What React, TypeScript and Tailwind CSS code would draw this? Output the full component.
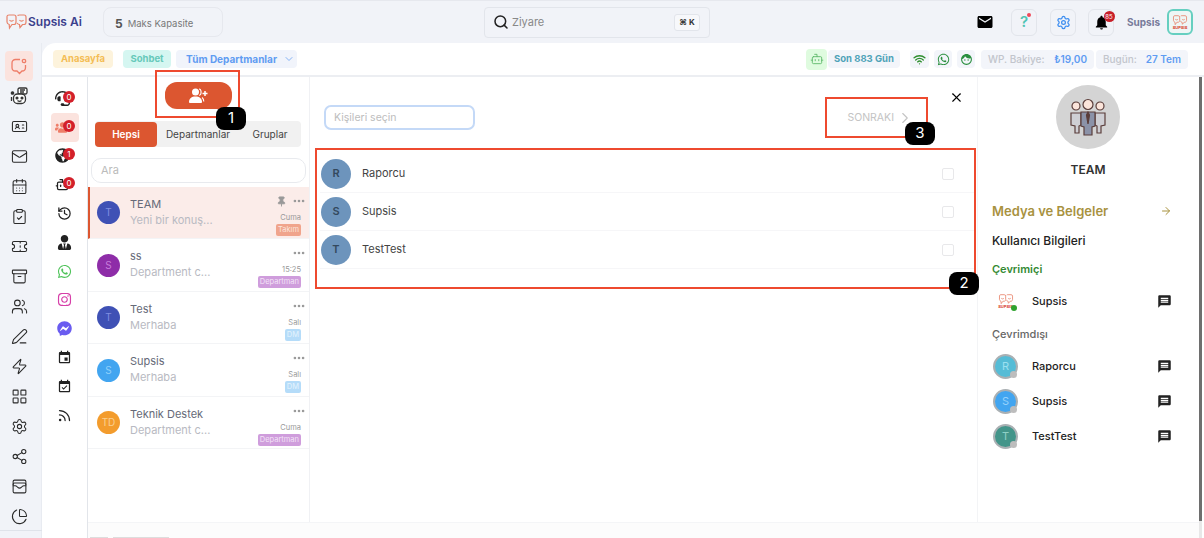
import React from "react";
import {
  IdCard, Mail, CalendarDays, ClipboardCheck, Ticket, Archive, Users, PenLine, Zap, LayoutGrid, Settings, Share2,
  WalletCards, PieChart, Search, ChevronDown, ChevronRight, X, ArrowRight, History, Rss, Wifi, Pin, Ellipsis, Bot,
} from "lucide-react";
import { FaWhatsapp, FaInstagram, FaFacebookMessenger, FaHeadset, FaUsers, FaGlobeAmericas, FaUserTie } from "react-icons/fa";
import { MdEmail, MdMessage, MdEvent, MdEventAvailable, MdNotifications, MdFace } from "react-icons/md";

const font = { fontFamily: "Inter, 'Noto Sans', sans-serif" };

function Logo({ small }: { small?: boolean }) {
  return (
    <svg width={small ? 16 : 23} height={small ? 11 : 16} viewBox="0 0 23 16" fill="none" stroke="#e8836b" strokeWidth="1.2">
      <path d="M2 2.500C2 1.500 3 1 4 1h5c1.300 0 2 .8 2 2v5c0 1.500-.8 2.500-2 2.500H7L4.500 14l-.3-3.500C2.800 10 2 9 2 8Z" />
      <path d="M12.500 1.500C13 1 13.500 1 14.500 1H19c1.200 0 2 .8 2 2v5c0 1.200-.8 2.500-2 2.500h-1.500l-2.500 3-.5-3c-1 0-2-.8-2.500-1.500" />
      <path d="M4.500 6c1 1.500 3 1.500 4 0M14.500 6c1 1.500 3 1.500 4 0" />
    </svg>
  );
}

function BrandMark() {
  return (
    <span className="flex flex-col items-center leading-none">
      <Logo small />
      <span className="text-[4px] font-bold leading-[4px] text-[#d9402a]">SUPSIS</span>
    </span>
  );
}

function Badge({ n }: { n: string }) {
  return (
    <span className="absolute -right-[5px] top-0 flex h-[12px] w-[12px] items-center justify-center rounded-full bg-[#d3202a] text-[8px] leading-none text-white">
      {n}
    </span>
  );
}

function BubbleIcon() {
  return (
    <svg width="18" height="18" viewBox="0 0 18 18" fill="none" stroke="#ee7d68" strokeWidth="1.300">
      <path d="M10 2.500H5.500C3.500 2.500 2 4 2 6v4.500C2 12.500 3.500 14 5.500 14H7l2.500 2.500L12 14c2 0 3.500-1.500 3.500-3.500V8" />
      <circle cx="14" cy="4" r="1.700" />
    </svg>
  );
}

function BotChatIcon() {
  return (
    <svg width="19" height="19" viewBox="0 0 19 19" fill="none" stroke="#333" strokeWidth="1.300">
      <rect x="8" y="1" width="9" height="6" rx="1.500" fill="#fff" />
      <path d="M10 3h5M10 5h4" />
      <rect x="3.500" y="7" width="12" height="9.500" rx="4" fill="#fff" />
      <circle cx="7" cy="11" r=".9" fill="#333" />
      <circle cx="12" cy="11" r=".9" fill="#333" />
      <path d="M7.500 13.500c1 .8 3 .8 4 0M1.500 10v4" />
      <circle cx="2.500" cy="6" r="1.200" fill="#333" />
    </svg>
  );
}

function AddUsersIcon() {
  return (
    <svg width="19" height="15" viewBox="0 0 19 15" fill="#fff">
      <circle cx="6.500" cy="4" r="3.500" />
      <path d="M0 14c0-3.500 2.500-5.500 6.500-5.500S13 10.500 13 14c0 .5-.5 1-1 1H1c-.5 0-1-.5-1-1Z" />
      <path d="M10 1c2.500 0 3 5.500 .2 6.500M13 9.500c1.300 1 1.800 2.500 1.800 4" fill="none" stroke="#fff" strokeWidth="1.100" />
      <path d="M16 3v5M13.500 5.500h5" fill="none" stroke="#fff" strokeWidth="1.500" />
    </svg>
  );
}

const rail: { Icon: any; custom?: boolean }[] = [
  { Icon: BubbleIcon, custom: true },
  { Icon: BotChatIcon, custom: true },
  { Icon: IdCard },
  { Icon: Mail },
  { Icon: CalendarDays },
  { Icon: ClipboardCheck },
  { Icon: Ticket },
  { Icon: Archive },
  { Icon: Users },
  { Icon: PenLine },
  { Icon: Zap },
  { Icon: LayoutGrid },
  { Icon: Settings },
  { Icon: Share2 },
  { Icon: WalletCards },
  { Icon: PieChart },
];

const subRail: [any, string | undefined, string][] = [
  [FaHeadset, "0", "text-[#222]"],
  [FaUsers, "0", "text-[#ee7d68]"],
  [FaGlobeAmericas, "1", "text-[#222]"],
  [Bot, "0", "text-[#222]"],
  [History, undefined, "text-[#222]"],
  [FaUserTie, undefined, "text-[#222]"],
  [FaWhatsapp, undefined, "text-[#4fc35a]"],
  [FaInstagram, undefined, "text-[#d63fa8]"],
  [FaFacebookMessenger, undefined, "text-[#6a5cf0]"],
  [MdEvent, undefined, "text-[#222]"],
  [MdEventAvailable, undefined, "text-[#222]"],
  [Rss, undefined, "text-[#222]"],
];

const chats = [
  { name: "TEAM", msg: "Yeni bir konuş...", init: "T", color: "bg-[#3f51b5]", ini: "text-[#7f8fe0]", time: "Cuma", tag: "Takım", tagc: "bg-[#f0a48c] text-[#fbe6df]", pin: true, h: "h-[52px]" },
  { name: "ss", msg: "Department c...", init: "S", color: "bg-[#8e2da8]", ini: "text-[#c77ddb]", time: "15:25", tag: "Departman", tagc: "bg-[#cf9ddc] text-[#f3e3f7]", h: "h-[53px]" },
  { name: "Test", msg: "Merhaba", init: "T", color: "bg-[#3f51b5]", ini: "text-[#7f8fe0]", time: "Salı", tag: "DM", tagc: "bg-[#b5dcf9] text-[#e4f3fd]", h: "h-[52px]" },
  { name: "Supsis", msg: "Merhaba", init: "S", color: "bg-[#42a5f0]", ini: "text-[#8fd0fa]", time: "Salı", tag: "DM", tagc: "bg-[#b5dcf9] text-[#e4f3fd]", h: "h-[53px]" },
  { name: "Teknik Destek", msg: "Department c...", init: "TD", color: "bg-[#f39c2d]", ini: "text-[#fbd08f]", time: "Cuma", tag: "Departman", tagc: "bg-[#cf9ddc] text-[#f3e3f7]", h: "h-[52px]" },
];

function Annot({ n, box, badge }: { n: string; box: string; badge: string }) {
  return (
    <>
      <div className={`absolute border-2 border-[#ee4a2f] ${box}`} />
      <div className={`absolute flex h-[23px] w-[30px] items-center justify-center rounded-[8px] bg-black text-[15px] text-white ${badge}`}>{n}</div>
    </>
  );
}

function TeamIcon() {
  return (
    <svg width="38" height="40" viewBox="0 0 38 38" fill="none" stroke="#5a3d3a" strokeWidth="1.200">
      <circle cx="7" cy="8" r="4" fill="#fbe4da" />
      <circle cx="31" cy="8" r="4" fill="#fbe4da" />
      <path d="M2 15h10v12l-2 1v7H6v-7l-4-1ZM26 15h10v12l-4 1v7h-4v-7l-2-1Z" fill="#cfcfd4" />
      <circle cx="19" cy="6.500" r="5" fill="#fbe4da" />
      <path d="M12 14h14v14l-3 1v8h-8v-8l-3-1Z" fill="#8b92a8" />
      <path d="M19 14l-1.500 3 1.500 9 1.500-9Z" fill="#5a3d3a" />
    </svg>
  );
}

function Person({ name, init, color, ini }: { name: string; init: string; color: string; ini: string }) {
  return (
    <div className="flex h-[35px] items-center pl-[1px]">
      <div className={`relative flex h-[25px] w-[25px] items-center justify-center rounded-full border-2 border-[#aab0b3] text-[11px] ${color} ${ini}`}>
        {init}
        <span className="absolute -bottom-[1px] -right-[1px] h-[7px] w-[7px] rounded-full bg-[#bdbdbd]" />
      </div>
      <span className="ml-[14px] flex-1 text-[11px] font-medium text-[#222]">{name}</span>
      <MdMessage size={15} className="text-[#222]" />
    </div>
  );
}

export default function App() {
  return (
    <div style={font} className="relative flex h-[538px] w-[1204px] flex-col overflow-hidden bg-[#f1f3f8] text-[#333]">
      {/* top bar */}
      <header className="flex h-[43px] shrink-0 items-center border-t border-[#e6e8ee]">
        <div className="flex w-[103px] items-center pl-[5px]">
          <Logo />
          <span className="text-[12px] font-semibold text-[#3b3f8c]">Supsis Ai</span>
        </div>
        <div className="flex h-[30px] w-[120px] items-center rounded-[8px] border border-[#e6e8ee] pl-[11px] pt-[4px]">
          <span className="text-[12px] font-bold text-[#555]">5</span>
          <span className="ml-[5px] text-[9.500px] text-[#777]">Maks Kapasite</span>
        </div>
        <div className="ml-[261px] flex h-[31px] w-[226px] items-center rounded-[4px] border border-[#e2e5eb] pl-[8px] pr-[9px]">
          <Search size={16} strokeWidth={2.3} className="text-[#222]" />
          <span className="ml-[3px] flex-1 text-[11px] text-[#888]">Ziyare</span>
          <span className="flex h-[17px] w-[26px] items-center justify-center rounded-[3px] border border-[#e2e5eb] bg-[#f7f8fb] text-[8px] font-bold text-[#333]">⌘ K</span>
        </div>
        <MdEmail size={18} className="ml-[266px] text-black" />
        <div className="relative ml-[17px] flex h-[27px] w-[26px] items-center justify-center rounded-[6px] border border-[#e2e5eb] text-[15px] font-semibold text-[#4fc4b4]">
          ?<span className="absolute right-[5px] top-[3px] h-[4px] w-[4px] rounded-full bg-[#ef4a5a]" />
        </div>
        <div className="ml-[13px] flex h-[27px] w-[26px] items-center justify-center rounded-[6px] border border-[#e2e5eb]">
          <Settings size={15} className="text-[#3e8ef0]" />
        </div>
        <div className="ml-[12px] flex h-[27px] w-[26px] items-center justify-center rounded-[6px] border border-[#e2e5eb]">
          <span className="relative">
            <MdNotifications size={17} className="text-black" />
            <span className="absolute -right-[5px] -top-[3px] flex h-[11px] w-[11px] items-center justify-center rounded-full bg-[#c81e28] text-[6px] text-white">85</span>
          </span>
        </div>
        <span className="ml-[13px] text-[10px] font-bold text-[#777a9a]">Supsis</span>
        <div className="ml-[7px] flex h-[26px] w-[26px] items-center justify-center rounded-[6px] border-2 border-[#66cfc0] bg-[#eef6f5]">
          <BrandMark />
        </div>
      </header>

      {/* body */}
      <div className="flex min-h-0 flex-1">
        {/* main rail */}
        <nav className="flex w-[42px] shrink-0 flex-col items-center border-r border-[#e8ebf1] pr-[3px] pt-[8px]">
          {rail.map(({ Icon, custom }, i) => (
            <div key={i} className={`flex h-[30px] w-[28px] shrink-0 items-center justify-center ${i === 0 ? "rounded-[4px] bg-[#fbe3de]" : ""}`}>
              {custom ? <Icon /> : <Icon size={17} strokeWidth={1.5} className="text-[#2a2a2a]" />}
            </div>
          ))}
          <div className="-mr-[3px] mt-[-1px] h-px w-[42px] bg-[#dfe3ea]" />
        </nav>

        <div className="flex min-w-0 flex-1 flex-col overflow-hidden rounded-tl-[14px] bg-white">
          {/* subheader */}
          <div className="flex h-[34px] shrink-0 items-center border-b-2 border-[#eceef2] pl-[11px] pr-[16px]">
            <span className="flex h-[18px] w-[60px] items-center justify-center rounded-[4px] bg-[#fdf3dc] text-[9.500px] font-bold text-[#f4bd55]">Anasayfa</span>
            <span className="ml-[10px] flex h-[18px] w-[48px] items-center justify-center rounded-[4px] bg-[#d5f6f1] text-[9.500px] font-bold text-[#67c9ba]">Sohbet</span>
            <span className="ml-[5px] flex h-[18px] w-[121px] items-center justify-between rounded-[4px] bg-[#f1f4fb] pl-[10px] pr-[2px] text-[10px] font-bold text-[#5f9cf2]">
              Tüm Departmanlar <ChevronDown size={12} strokeWidth={1.5} />
            </span>
            <div className="flex-1" />
            <span className="flex h-[21px] w-[21px] items-center justify-center rounded-[4px] bg-[#dffbdf]">
              <Bot size={14} strokeWidth={1.5} className="text-[#5bb868]" />
            </span>
            <span className="ml-[1px] flex h-[18px] w-[72px] items-center justify-center rounded-[4px] bg-[#f3f5fa] text-[9.500px] font-bold text-[#4fa3b8]">Son 883 Gün</span>
            <span className="ml-[10px] flex h-[18px] w-[19px] items-center justify-center rounded-[4px] bg-[#f3f5fa]">
              <Wifi size={13} strokeWidth={2.5} className="text-[#2f8f2f]" />
            </span>
            <span className="ml-[5px] flex h-[18px] w-[18px] items-center justify-center rounded-[4px] bg-[#f3f5fa]">
              <FaWhatsapp size={13} className="text-[#2a8f3f]" />
            </span>
            <span className="ml-[5px] flex h-[18px] w-[18px] items-center justify-center rounded-[4px] bg-[#f3f5fa]">
              <MdFace size={13} className="text-[#2a8f3f]" />
            </span>
            <span className="ml-[6px] flex h-[19px] w-[113px] items-center justify-between rounded-[4px] bg-[#f3f5fa] px-[7px] text-[10px] font-medium text-[#c2c5cc]">
              WP. Bakiye: <b className="font-semibold text-[#5f9cf2]">₺19,00</b>
            </span>
            <span className="ml-[2px] flex h-[19px] w-[92px] items-center justify-between rounded-[4px] bg-[#f3f5fa] px-[7px] text-[10px] font-medium text-[#c2c5cc]">
              Bugün: <b className="font-semibold text-[#5f9cf2]">27 Tem</b>
            </span>
          </div>

          <div className="flex min-h-0 flex-1">
            {/* secondary rail */}
            <div className="flex w-[46px] shrink-0 flex-col items-center border-r border-[#e2e5ea] pt-[7px]">
              {subRail.map(([Icon, b, color], i) => (
                <div key={i} className={`flex h-[28.800px] w-[28px] shrink-0 items-center justify-center ${i === 1 ? "rounded-[4px] bg-[#fbe3de]" : ""}`}>
                  <span className={`relative ${b ? "mr-[4px]" : ""}`}>
                    <Icon size={15} className={color} />
                    {b && <Badge n={b} />}
                  </span>
                </div>
              ))}
            </div>

            <div className="flex min-w-0 flex-1 flex-col">
              <div className="flex min-h-0 flex-1">
                {/* chat list */}
                <aside className="flex w-[222px] shrink-0 flex-col border-r border-[#f0f1f4]">
                  <div className="flex justify-center pt-[5px]">
                    <button className="flex h-[27px] w-[67px] items-center justify-center rounded-[12px] bg-[#dc5630] text-white">
                      <AddUsersIcon />
                    </button>
                  </div>
                  <div className="ml-[7px] mt-[12px] flex h-[26px] w-[206px] items-center rounded-[4px] bg-[#f1f1f1] pt-px text-[10px] text-[#444]">
                    <span className="flex h-full w-[62px] items-center justify-center rounded-[4px] bg-[#dc5630] font-semibold text-white">Hepsi</span>
                    <span className="w-[82px] text-center">Departmanlar</span>
                    <span className="w-[62px] text-center">Gruplar</span>
                  </div>
                  <div className="ml-[3px] mt-[11px] flex h-[25px] w-[215px] items-center rounded-[10px] border border-[#e8eaee] pl-[9px] text-[11px] text-[#bbb]">Ara</div>
                  <div className="mt-[4px]">
                    {chats.map((c, i) => (
                      <div key={c.name} className={`flex items-center border-b border-[#f3f4f6] pr-[3px] ${c.h} ${i === 0 ? "border-l-2 border-l-[#dc5630] bg-[#fbece9] pl-[7px]" : "pl-[9px]"}`}>
                        <div className={`flex h-[23px] w-[23px] shrink-0 items-center justify-center rounded-full text-[10px] ${c.color} ${c.ini}`}>{c.init}</div>
                        <div className="ml-[10px] min-w-0 flex-1 pb-[2px]">
                          <div className="text-[11px] leading-[16px] text-[#666a78]">{c.name}</div>
                          <div className="text-[11px] leading-[16px] text-[#b8bac2]">{c.msg}</div>
                        </div>
                        <div className="flex flex-col items-end self-start pt-[8px]">
                          <div className="flex h-[12px] items-center gap-[2px] text-[#999]">
                            {c.pin && <Pin size={11} fill="#999" className="mr-[3px]" />}
                            <Ellipsis size={14} strokeWidth={2.5} />
                          </div>
                          <div className="mr-[5px] mt-[6px] text-[7.500px] leading-[10px] text-[#999]">{c.time}</div>
                          <div className={`mr-[5px] mt-px rounded-[2px] px-[2px] text-[7.500px] leading-[12px] ${c.tagc}`}>{c.tag}</div>
                        </div>
                      </div>
                    ))}
                  </div>
                </aside>

                {/* picker */}
                <main className="flex min-w-0 flex-1 flex-col">
                  <div className="flex h-[72px] shrink-0 items-start pl-[14px] pr-[13px]">
                    <div className="mt-[28px] flex h-[25px] w-[151px] items-center rounded-[7px] border-2 border-[#c4d9f7] pl-[8px] text-[10.500px] text-[#bdbdbd]">Kişileri seçin</div>
                    <div className="ml-auto mt-[32px] flex items-center text-[10.500px] text-[#c4c4c4]">
                      SONRAKI <ChevronRight size={18} strokeWidth={1.5} className="ml-[2px]" />
                    </div>
                    <X size={15} strokeWidth={1.8} className="ml-[35px] mt-[13px] text-black" />
                  </div>
                  <div className="pl-[10px] pr-[3px] pt-[6px]">
                    {[["R", "Raporcu"], ["S", "Supsis"], ["T", "TestTest"]].map(([i, n]) => (
                      <div key={n} className="flex h-[38px] items-center border-b border-[#f6f6f8] pl-[1px]">
                        <span className="flex h-[30px] w-[30px] items-center justify-center rounded-full bg-[#6d94bc] text-[11px] font-semibold text-[#34495e]">{i}</span>
                        <span className="ml-[11px] flex-1 text-[11px] text-[#444]">{n}</span>
                        <span className="mr-[20px] h-[12px] w-[12px] rounded-[2px] border border-[#e8e8ea]" />
                      </div>
                    ))}
                  </div>
                </main>

                {/* details */}
                <aside className="flex w-[222px] shrink-0 flex-col border-l border-[#f3f4f6] pl-[14px] pr-[27px] pt-[8px]">
                  <div className="flex flex-col items-center pl-[12px]">
                    <div className="flex h-[64px] w-[64px] items-center justify-center rounded-full bg-[#d4d4d4]">
                      <TeamIcon />
                    </div>
                    <div className="mt-[12px] text-[12px] font-semibold leading-[18px] text-[#333]">TEAM</div>
                  </div>
                  <div className="mt-[22px] flex items-center justify-between text-[13px] font-semibold leading-[20px] text-[#a8923f]">
                    Medya ve Belgeler <ArrowRight size={12} />
                  </div>
                  <div className="mt-[10px] text-[12px] font-medium leading-[20px] text-[#222]">Kullanıcı Bilgileri</div>
                  <div className="mt-[8px] text-[11px] font-semibold leading-[20px] text-[#338a33]">Çevrimiçi</div>
                  <div className="mt-[6px] flex h-[32px] items-center pl-[1px]">
                    <div className="relative flex h-[25px] w-[25px] items-center justify-center rounded-full bg-white">
                      <BrandMark />
                      <span className="absolute bottom-[3px] right-[1px] h-[6px] w-[6px] rounded-full bg-[#2fa32f]" />
                    </div>
                    <span className="ml-[14px] flex-1 text-[11px] font-medium text-[#222]">Supsis</span>
                    <MdMessage size={15} className="text-[#222]" />
                  </div>
                  <div className="mt-[7px] text-[11px] font-medium leading-[20px] text-[#666]">Çevrimdışı</div>
                  <div className="mt-[5px]">
                    <Person name="Raporcu" init="R" color="bg-[#55bcd6]" ini="text-[#9ce0f0]" />
                    <Person name="Supsis" init="S" color="bg-[#42a5f0]" ini="text-[#96d2fb]" />
                    <Person name="TestTest" init="T" color="bg-[#43958a]" ini="text-[#8fd0c6]" />
                  </div>
                </aside>
              </div>
              <div className="flex h-[16px] shrink-0 items-end gap-[5px] border-t border-[#f4f5f7] bg-[#fcfcfc] pl-[2px]">
                <span className="h-px w-[18px] bg-[#ddd]" />
                <span className="h-px w-[56px] bg-[#ddd]" />
              </div>
            </div>
            <div className="flex w-[5px] shrink-0 flex-col">
              <div className="h-[444px] w-[3px] bg-[#6e6e6e]" />
              <div className="w-[3px] flex-1 bg-[#e8e8e8]" />
            </div>
          </div>
        </div>
      </div>

      {/* annotations */}
      <Annot n="1" box="left-[155px] top-[70px] h-[48px] w-[85px]" badge="left-[216px] top-[107px]" />
      <Annot n="2" box="left-[315px] top-[148px] h-[141px] w-[661px]" badge="left-[949px] top-[272px]" />
      <Annot n="3" box="left-[825px] top-[97px] h-[41px] w-[103px]" badge="left-[905px] top-[122px]" />
    </div>
  );
}
